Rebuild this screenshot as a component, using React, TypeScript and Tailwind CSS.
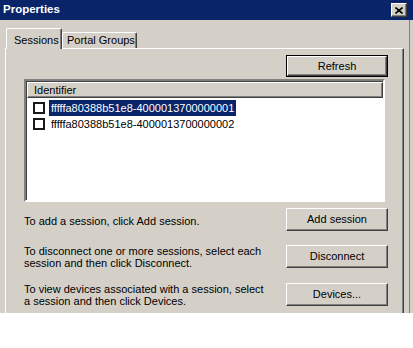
import React from "react";

const bevel =
  "border border-t-white border-l-white border-r-[#404040] border-b-[#404040] shadow-[inset_-1px_-1px_#808080]";

function ClassicButton({ label, isDefault = false }: { label: string; isDefault?: boolean }) {
  if (isDefault) {
    return (
      <div className="h-[22px] w-[102px] shrink-0 border border-black">
        <div className={`flex h-full w-full items-center justify-center ${bevel}`}>{label}</div>
      </div>
    );
  }
  return (
    <div className={`flex h-[23px] w-[102px] shrink-0 items-center justify-center ${bevel}`}>
      {label}
    </div>
  );
}

function CloseButton() {
  return (
    <div className={`flex h-[14px] w-[16px] items-center justify-center bg-[#d4d0c8] ${bevel}`}>
      <svg width="8" height="7" viewBox="0 0 8 7">
        <path d="M0.5 0.5 L7.5 6.5 M7.5 0.5 L0.5 6.5" stroke="#000" strokeWidth="1.6" />
      </svg>
    </div>
  );
}

const sessions = [
  { id: "fffffa80388b51e8-4000013700000001", selected: true },
  { id: "fffffa80388b51e8-4000013700000002", selected: false },
];

const actions = [
  { text: ["To add a session, click Add session."], button: "Add session" },
  {
    text: ["To disconnect one or more sessions, select each", "session and then click Disconnect."],
    button: "Disconnect",
  },
  {
    text: ["To view devices associated with a session, select", "a session and then click Devices."],
    button: "Devices...",
  },
];

export default function App() {
  return (
    <div className="h-[348px] w-[413px] bg-white font-['Liberation_Sans',Arial,sans-serif] text-[11px] text-black">
      <div className="flex h-[313px] flex-col overflow-hidden bg-[#d4d0c8]">
        <div className="flex h-[20px] shrink-0 items-center justify-between bg-[#0a246a] pl-[3px] pr-[6px]">
          <span className="text-[11.5px] font-bold text-white">Properties</span>
          <CloseButton />
        </div>

        <div className="flex w-[410px] flex-1 flex-col border-r border-r-[#808080] pl-[5px] pr-[5px] pt-[8px]">
          {/* tabs */}
          <div className="flex h-[20px] items-end">
            <div className="relative z-10 -mb-px ml-px flex h-[21px] w-[56px] items-start rounded-t-[2px] border-l border-t border-l-white border-t-white border-r border-r-[#404040] bg-[#d4d0c8] pl-[7px] pt-[3px] shadow-[inset_-1px_0_#808080]">
              Sessions
            </div>
            <div className="flex h-[16px] w-[75px] items-center rounded-t-[2px] border-l border-t border-l-white border-t-white border-r border-r-[#404040] pl-[4px] shadow-[inset_-1px_0_#808080]">
              Portal Groups
            </div>
          </div>

          {/* panel */}
          <div className="flex flex-1 flex-col border-l border-t border-l-white border-t-white border-r border-r-[#404040] pl-[18px] pr-[15px] pt-[6px] shadow-[inset_-1px_0_#808080]">
            <div className="flex justify-end">
              <ClassicButton label="Refresh" isDefault />
            </div>

            <div className="mt-[2px] h-[123px] w-[361px] border-2 border-t-[#808080] border-l-[#808080] border-b-white border-r-white bg-white">
              <div className="h-full border-t border-l border-t-[#404040] border-l-[#404040]">
                <div className={`flex h-[16px] items-center bg-[#d4d0c8] pl-[6px] ${bevel}`}>Identifier</div>
                <div className="mt-[2px]">
                  {sessions.map((s) => (
                    <div key={s.id} className="flex h-[16px] items-center pl-[6px]">
                      <span className="h-[12px] w-[12px] border-2 border-[#1a1a1a] bg-white" />
                      <span
                        className={`ml-[4px] flex h-full items-center px-[2px] ${
                          s.selected ? "bg-[#0a246a] text-white" : ""
                        }`}
                      >
                        {s.id}
                      </span>
                    </div>
                  ))}
                </div>
              </div>
            </div>

            <div className="mt-[6px] flex flex-col gap-[12px]">
              {actions.map((a) => (
                <div key={a.button} className="flex items-center justify-between">
                  <div className="pt-[2px] leading-[12px]">
                    {a.text.map((line) => (
                      <div key={line}>{line}</div>
                    ))}
                  </div>
                  <ClassicButton label={a.button} />
                </div>
              ))}
            </div>
          </div>
        </div>
      </div>
    </div>
  );
}
